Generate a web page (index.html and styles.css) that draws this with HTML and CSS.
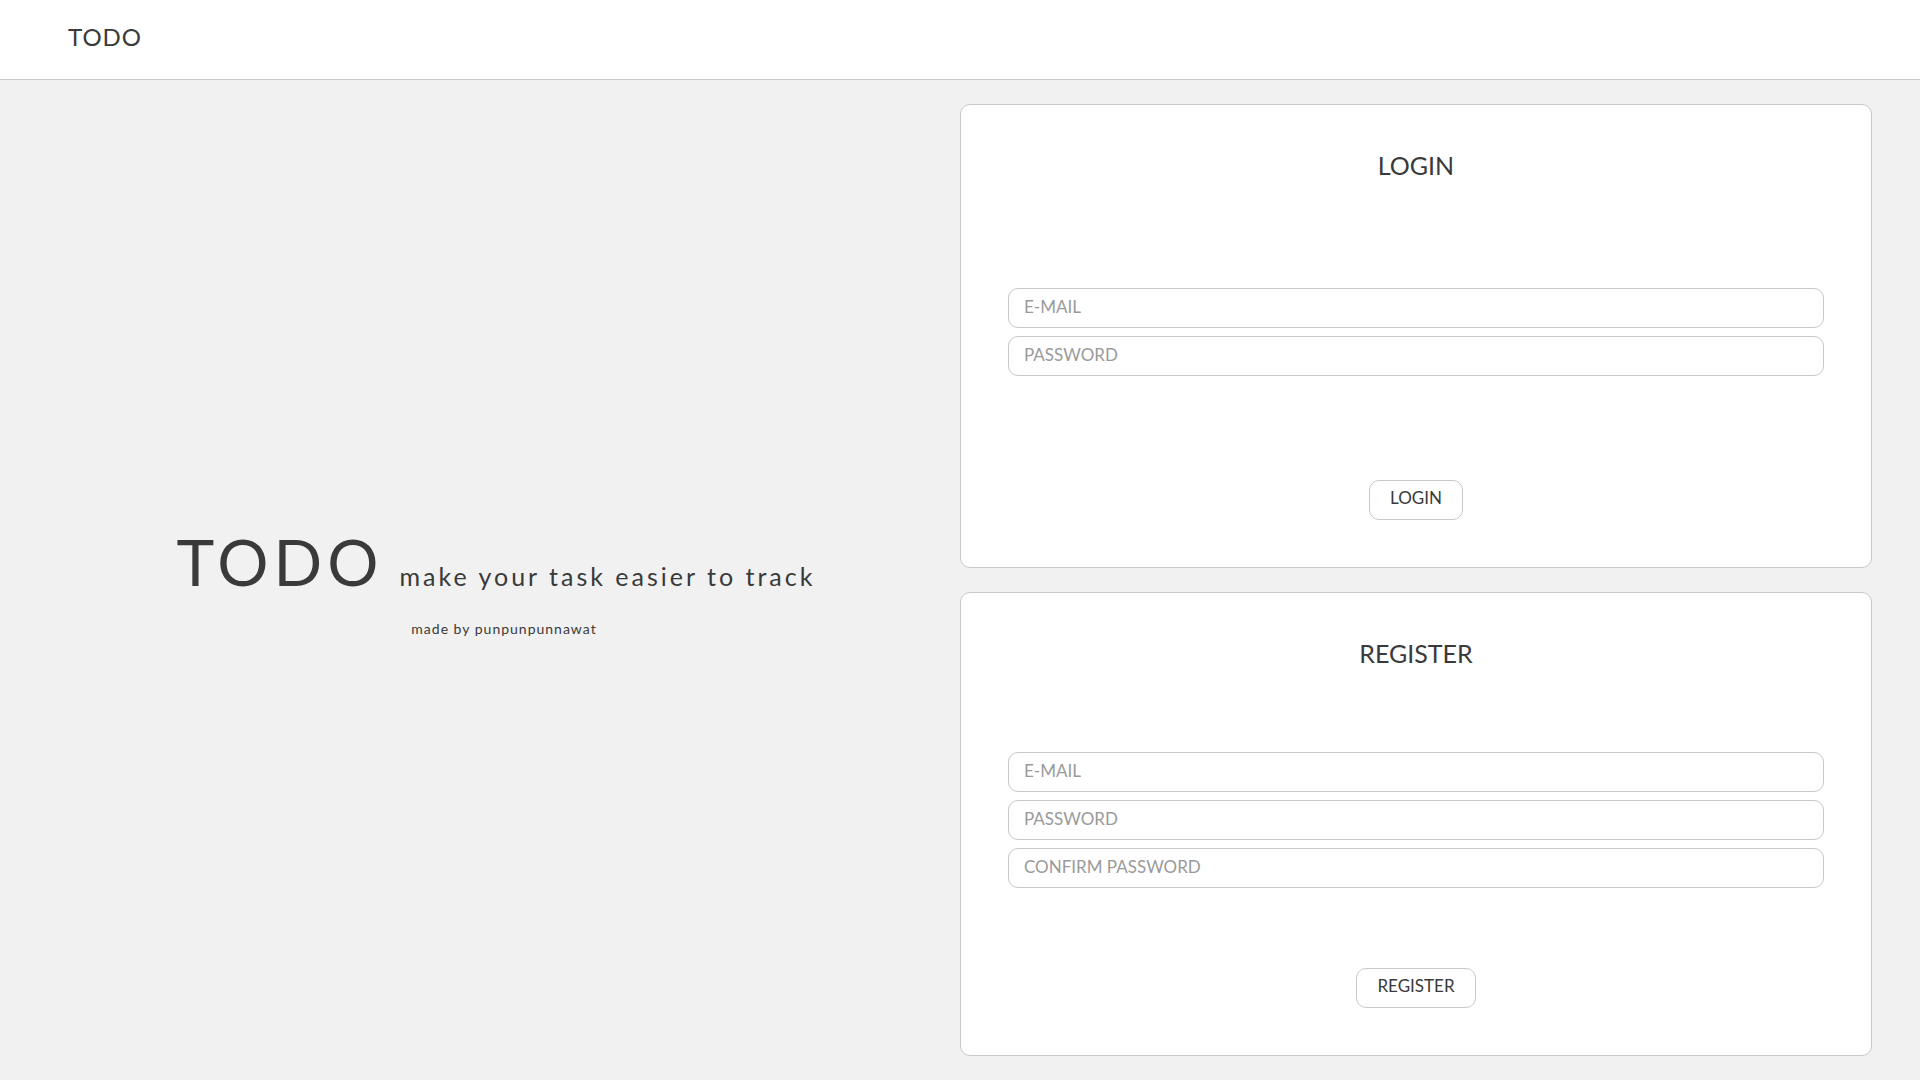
FILE: index.html
```html
<!DOCTYPE html>
<html lang="en">
<head>
<meta charset="utf-8">
<meta name="viewport" content="width=device-width, initial-scale=1">
<title>TODO</title>
<link rel="stylesheet" href="styles.css">
</head>
<body>
<header class="header">
  <a class="brand" href="#">TODO</a>
</header>
<main class="main">
  <section class="hero">
    <div class="hero-line">
      <h1 class="hero-title">TODO</h1>
      <p class="hero-tagline">make your task easier to track</p>
    </div>
    <p class="hero-credit">made by punpunpunnawat</p>
  </section>
  <div class="forms">
    <form class="card">
      <h2 class="card-title">LOGIN</h2>
      <div class="fields">
        <input class="field" type="email" placeholder="E-MAIL" aria-label="E-MAIL">
        <input class="field" type="password" placeholder="PASSWORD" aria-label="PASSWORD">
      </div>
      <button class="button" type="submit">LOGIN</button>
    </form>
    <form class="card">
      <h2 class="card-title">REGISTER</h2>
      <div class="fields">
        <input class="field" type="email" placeholder="E-MAIL" aria-label="E-MAIL">
        <input class="field" type="password" placeholder="PASSWORD" aria-label="PASSWORD">
        <input class="field" type="password" placeholder="CONFIRM PASSWORD" aria-label="CONFIRM PASSWORD">
      </div>
      <button class="button" type="submit">REGISTER</button>
    </form>
  </div>
</main>
</body>
</html>
```
FILE: styles.css
```css
* {
  box-sizing: border-box;
}

body {
  display: flex;
  flex-direction: column;
  min-height: 100vh;
  margin: 0;
  background: #f1f1f1;
  color: #3a3a3a;
  font-family: Lato, "Liberation Sans", sans-serif;
}

h1,
h2,
p {
  margin: 0;
  font-weight: 400;
}

.header {
  display: flex;
  align-items: center;
  height: 80px;
  padding: 0 68px 6px;
  background: #fff;
  border-bottom: 1px solid #c8c8c8;
}

.brand {
  color: inherit;
  font-size: 24px;
  letter-spacing: 1px;
  text-decoration: none;
}

.main {
  display: grid;
  grid-template-columns: 1fr 1fr;
  flex: 1;
  padding: 24px 48px;
}

.hero {
  display: flex;
  flex-direction: column;
  align-items: center;
  justify-content: center;
  gap: 20px;
}

.hero-line {
  display: flex;
  align-items: baseline;
  gap: 16px;
  padding-right: 16px;
}

.hero-title {
  font-size: 64px;
  letter-spacing: 5px;
}

.hero-tagline {
  font-size: 25px;
  letter-spacing: 3px;
}

.hero-credit {
  font-size: 14px;
  letter-spacing: 1px;
}

.forms {
  display: grid;
  grid-auto-rows: 1fr;
  gap: 24px;
}

.card {
  display: flex;
  flex-direction: column;
  align-items: center;
  justify-content: space-between;
  padding: 47px;
  background: #fff;
  border: 1px solid #c8c8c8;
  border-radius: 10px;
}

.card-title {
  font-size: 25px;
  line-height: 26px;
  padding-bottom: 6px;
}

.fields {
  display: grid;
  gap: 8px;
  width: 100%;
}

.field {
  width: 100%;
  height: 40px;
  padding: 0 15px 4px;
  background: #fff;
  border: 1px solid #c8c8c8;
  border-radius: 10px;
  color: inherit;
  font: inherit;
  font-size: 17px;
}

.field::placeholder {
  color: #9a9a9a;
}

.button {
  height: 40px;
  padding: 0 20px 6px;
  background: #fff;
  border: 1px solid #c8c8c8;
  border-radius: 10px;
  color: inherit;
  font: inherit;
  font-size: 17px;
  cursor: pointer;
}
```
